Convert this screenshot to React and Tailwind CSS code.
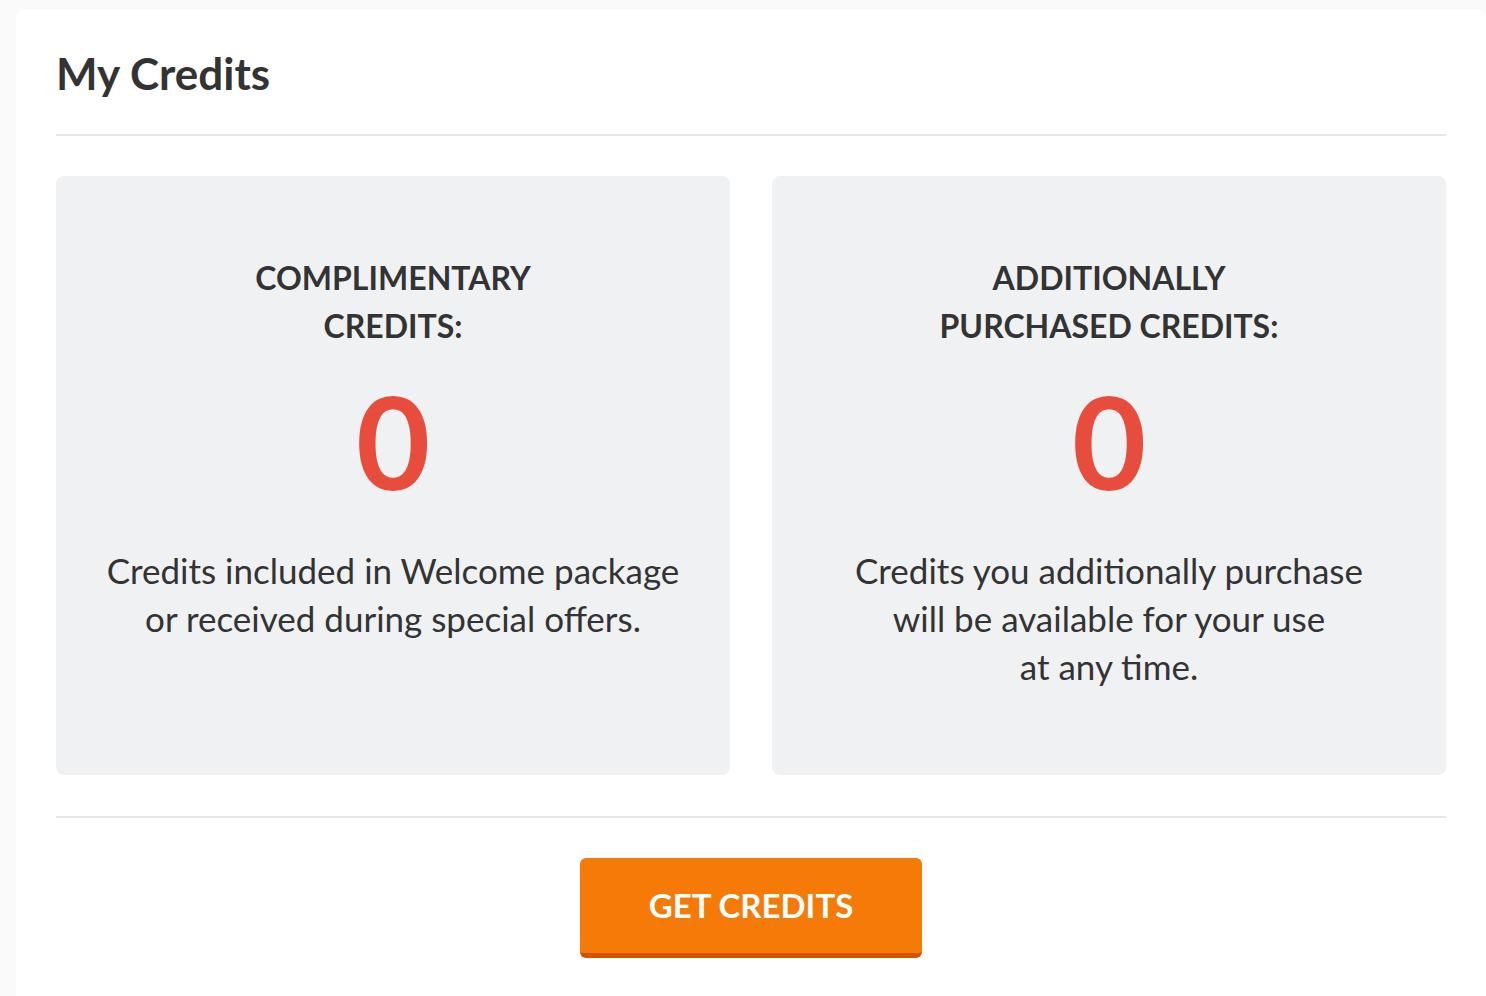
import React from "react";

const cards = [
  {
    title: ["COMPLIMENTARY", "CREDITS:"],
    value: 0,
    text: ["Credits included in Welcome package", "or received during special offers."],
  },
  {
    title: ["ADDITIONALLY", "PURCHASED CREDITS:"],
    value: 0,
    text: ["Credits you additionally purchase", "will be available for your use", "at any time."],
  },
];

function CreditCard({ title, value, text }) {
  return (
    <div className="bg-[#f0f1f3] rounded-lg h-[599px] pt-[78px] flex flex-col items-center text-center">
      <h3 className="text-[32px] leading-[48px] font-bold text-[#333]">
        {title.map((line) => (
          <div key={line}>{line}</div>
        ))}
      </h3>
      <div className="text-[128px] leading-[150px] font-bold text-[#e74c3c] mt-[16px]">{value}</div>
      <p className="text-[35px] leading-[48px] text-[#333] mt-[30px]">
        {text.map((line) => (
          <span key={line} className="block">
            {line}
          </span>
        ))}
      </p>
    </div>
  );
}

export default function App() {
  return (
    <div className="min-h-screen bg-[#fafafa] pt-[10px] pl-[16px] font-['Lato',sans-serif]">
      <div className="bg-white rounded-tl-lg rounded-tr-lg min-h-[986px] px-[40px]">
        <div className="pt-[33px] pb-[31px] border-b-2 border-[#e6e6e6]">
          <h1 className="text-[44px] leading-[60px] font-bold text-[#333]">My Credits</h1>
        </div>
        <div className="grid grid-cols-2 gap-[42px] pt-[40px] pb-[41px] border-b-2 border-[#e6e6e6]">
          {cards.map((c) => (
            <CreditCard key={c.title[0]} {...c} />
          ))}
        </div>
        <div className="flex justify-center pt-[40px]">
          <button className="w-[342px] h-[100px] rounded-md bg-[#f57a07] border-b-[5px] border-[#d35400] text-white text-[33px] font-bold">
            GET CREDITS
          </button>
        </div>
      </div>
    </div>
  );
}
